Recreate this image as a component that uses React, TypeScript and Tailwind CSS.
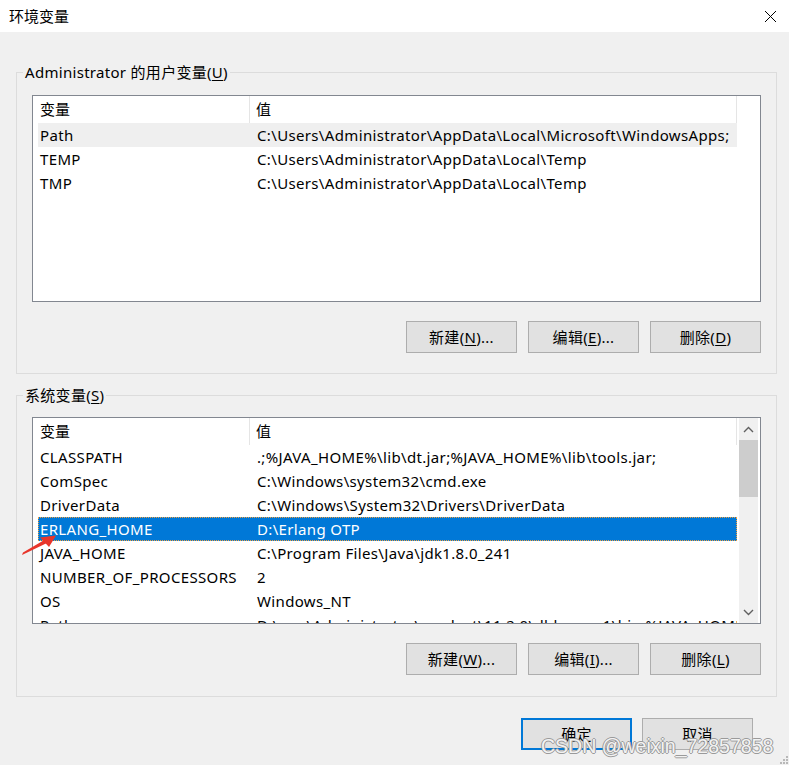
import React from "react";

const FONT = '"Noto Sans", "Noto Sans CJK SC", sans-serif';

type Row = { name: string; value: string; selected?: boolean; hover?: boolean };

const userRows: Row[] = [
  { name: "Path", value: "C:\\Users\\Administrator\\AppData\\Local\\Microsoft\\WindowsApps;", hover: true },
  { name: "TEMP", value: "C:\\Users\\Administrator\\AppData\\Local\\Temp" },
  { name: "TMP", value: "C:\\Users\\Administrator\\AppData\\Local\\Temp" },
];

const sysRows: Row[] = [
  { name: "CLASSPATH", value: ".;%JAVA_HOME%\\lib\\dt.jar;%JAVA_HOME%\\lib\\tools.jar;" },
  { name: "ComSpec", value: "C:\\Windows\\system32\\cmd.exe" },
  { name: "DriverData", value: "C:\\Windows\\System32\\Drivers\\DriverData" },
  { name: "ERLANG_HOME", value: "D:\\Erlang OTP", selected: true },
  { name: "JAVA_HOME", value: "C:\\Program Files\\Java\\jdk1.8.0_241" },
  { name: "NUMBER_OF_PROCESSORS", value: "2" },
  { name: "OS", value: "Windows_NT" },
  { name: "Path", value: "D:\\app\\Administrator\\product\\11.2.0\\dbhome_1\\bin;%JAVA_HOME%\\bin;" },
];

function ListView({ rows, scrollbar }: { rows: Row[]; scrollbar?: boolean }) {
  return (
    <div className="flex h-[207px] w-[729px] overflow-hidden border border-[#828790] bg-white">
      <div className="flex w-[704px] shrink-0 flex-col overflow-hidden">
        <div className="flex h-[27px] w-[704px] shrink-0">
          <div className="flex w-[217px] items-center border-r border-[#e5e5e5] pl-[7px]">变量</div>
          <div className="flex flex-1 items-center border-r border-[#e5e5e5] pl-[6px]">值</div>
        </div>
        {rows.map((r, i) => (
          <div
            key={i}
            className={
              "ml-[5px] flex h-[24px] w-[699px] shrink-0 items-center whitespace-nowrap tracking-[0.35px] " +
              (r.selected
                ? "bg-[#0078d7] text-white outline-1 outline-dotted outline-[#f0a040] -outline-offset-1"
                : r.hover
                ? "bg-[#efefef]"
                : "")
            }
          >
            <div className="w-[212px] shrink-0 pl-[2px]">{r.name}</div>
            <div className="pl-[7px]">{r.value}</div>
          </div>
        ))}
      </div>
      {scrollbar && (
        <div className="ml-[2px] flex h-full w-[19px] shrink-0 flex-col bg-[#f0f0f0]">
          <div className="flex h-[22px] items-center justify-center">
            <svg width="11" height="7" viewBox="0 0 11 7">
              <path d="M1 6 L5.5 1.5 L10 6" fill="none" stroke="#606060" strokeWidth="1.4" />
            </svg>
          </div>
          <div className="h-[57px] bg-[#cdcdcd]" />
          <div className="flex-1" />
          <div className="flex h-[22px] items-center justify-center">
            <svg width="11" height="7" viewBox="0 0 11 7">
              <path d="M1 1 L5.5 5.5 L10 1" fill="none" stroke="#606060" strokeWidth="1.4" />
            </svg>
          </div>
        </div>
      )}
    </div>
  );
}

function Btn({ label, u, rest, primary }: { label: string; u?: string; rest?: string; primary?: boolean }) {
  return (
    <div
      className={
        "flex h-[32px] w-[111px] items-center justify-center bg-[#e1e1e1] tracking-[0.3px] " +
        (primary ? "border-2 border-[#0078d7]" : "border border-[#adadad]")
      }
    >
      <span>
        {label}
        {u !== undefined && (
          <>
            (<span className="underline underline-offset-2">{u}</span>){rest}
          </>
        )}
      </span>
    </div>
  );
}

function Group({
  title,
  children,
  className,
}: {
  title: React.ReactNode;
  children: React.ReactNode;
  className?: string;
}) {
  return (
    <div className={"relative ml-[16px] w-[761px] border border-[#dcdcdc] px-[15px] " + (className || "")}>
      <span className="absolute left-[6px] top-[-11px] bg-[#f0f0f0] px-[2px] leading-[20px] tracking-[0.3px]">
        {title}
      </span>
      {children}
    </div>
  );
}

export default function App() {
  return (
    <div
      className="relative h-[765px] w-[789px] overflow-hidden bg-[#f0f0f0] text-[15px] text-black"
      style={{ fontFamily: FONT }}
    >
      {/* Title bar */}
      <div className="flex h-[32px] items-center justify-between bg-white pl-[9px] pr-[12px]">
        <span className="leading-[20px]">环境变量</span>
        <svg width="13" height="13" viewBox="0 0 13 13">
          <path d="M1 1 L12 12 M12 1 L1 12" stroke="#000" strokeWidth="1" />
        </svg>
      </div>

      {/* User variables */}
      <Group
        title={
          <>
            Administrator 的用户变量(<span className="underline underline-offset-2">U</span>)
          </>
        }
        className="mt-[40px] pb-[20px] pt-[22px]"
      >
        <ListView rows={userRows} />
        <div className="mt-[19px] flex justify-end gap-[11px]">
          <Btn label="新建" u="N" rest="..." />
          <Btn label="编辑" u="E" rest="..." />
          <Btn label="删除" u="D" />
        </div>
      </Group>

      {/* System variables */}
      <Group
        title={
          <>
            系统变量(<span className="underline underline-offset-2">S</span>)
          </>
        }
        className="mt-[21px] pb-[21px] pt-[21px]"
      >
        <ListView rows={sysRows} scrollbar />
        <div className="mt-[19px] flex justify-end gap-[11px]">
          <Btn label="新建" u="W" rest="..." />
          <Btn label="编辑" u="I" rest="..." />
          <Btn label="删除" u="L" />
        </div>
      </Group>

      {/* Bottom buttons */}
      <div className="mt-[21px] flex justify-end gap-[10px] pr-[36px]">
        <Btn label="确定" primary />
        <Btn label="取消" />
      </div>

      {/* Red arrow annotation */}
      <svg className="absolute left-0 top-0" width="789" height="765" viewBox="0 0 789 765" pointerEvents="none">
        <polygon points="22,555 23,552.5 46,539 48,542.5" fill="#e8352b" />
        <polygon points="56,535.5 40,537.5 49,547" fill="#e8352b" />
      </svg>

      {/* Watermark */}
      <div
        className="absolute left-[541px] top-[735px] whitespace-nowrap text-[19.5px] leading-[22px] text-[rgba(255,255,255,0.9)] [text-shadow:1px_0_0_#9a9a9a,-1px_0_0_#9a9a9a,0_1px_0_#9a9a9a,0_-1px_0_#9a9a9a]"
        style={{ fontFamily: '"Liberation Sans", Arial, sans-serif' }}
      >
        CSDN @weixin_72857858
      </div>

      {/* Resize grip */}
      <svg className="absolute bottom-0 right-0" width="10" height="10" viewBox="0 0 10 10">
        <rect x="7" y="1" width="2" height="2" fill="#b8b8b8" />
        <rect x="4" y="4" width="2" height="2" fill="#b8b8b8" />
        <rect x="7" y="4" width="2" height="2" fill="#b8b8b8" />
        <rect x="1" y="7" width="2" height="2" fill="#b8b8b8" />
        <rect x="4" y="7" width="2" height="2" fill="#b8b8b8" />
        <rect x="7" y="7" width="2" height="2" fill="#b8b8b8" />
      </svg>
    </div>
  );
}
